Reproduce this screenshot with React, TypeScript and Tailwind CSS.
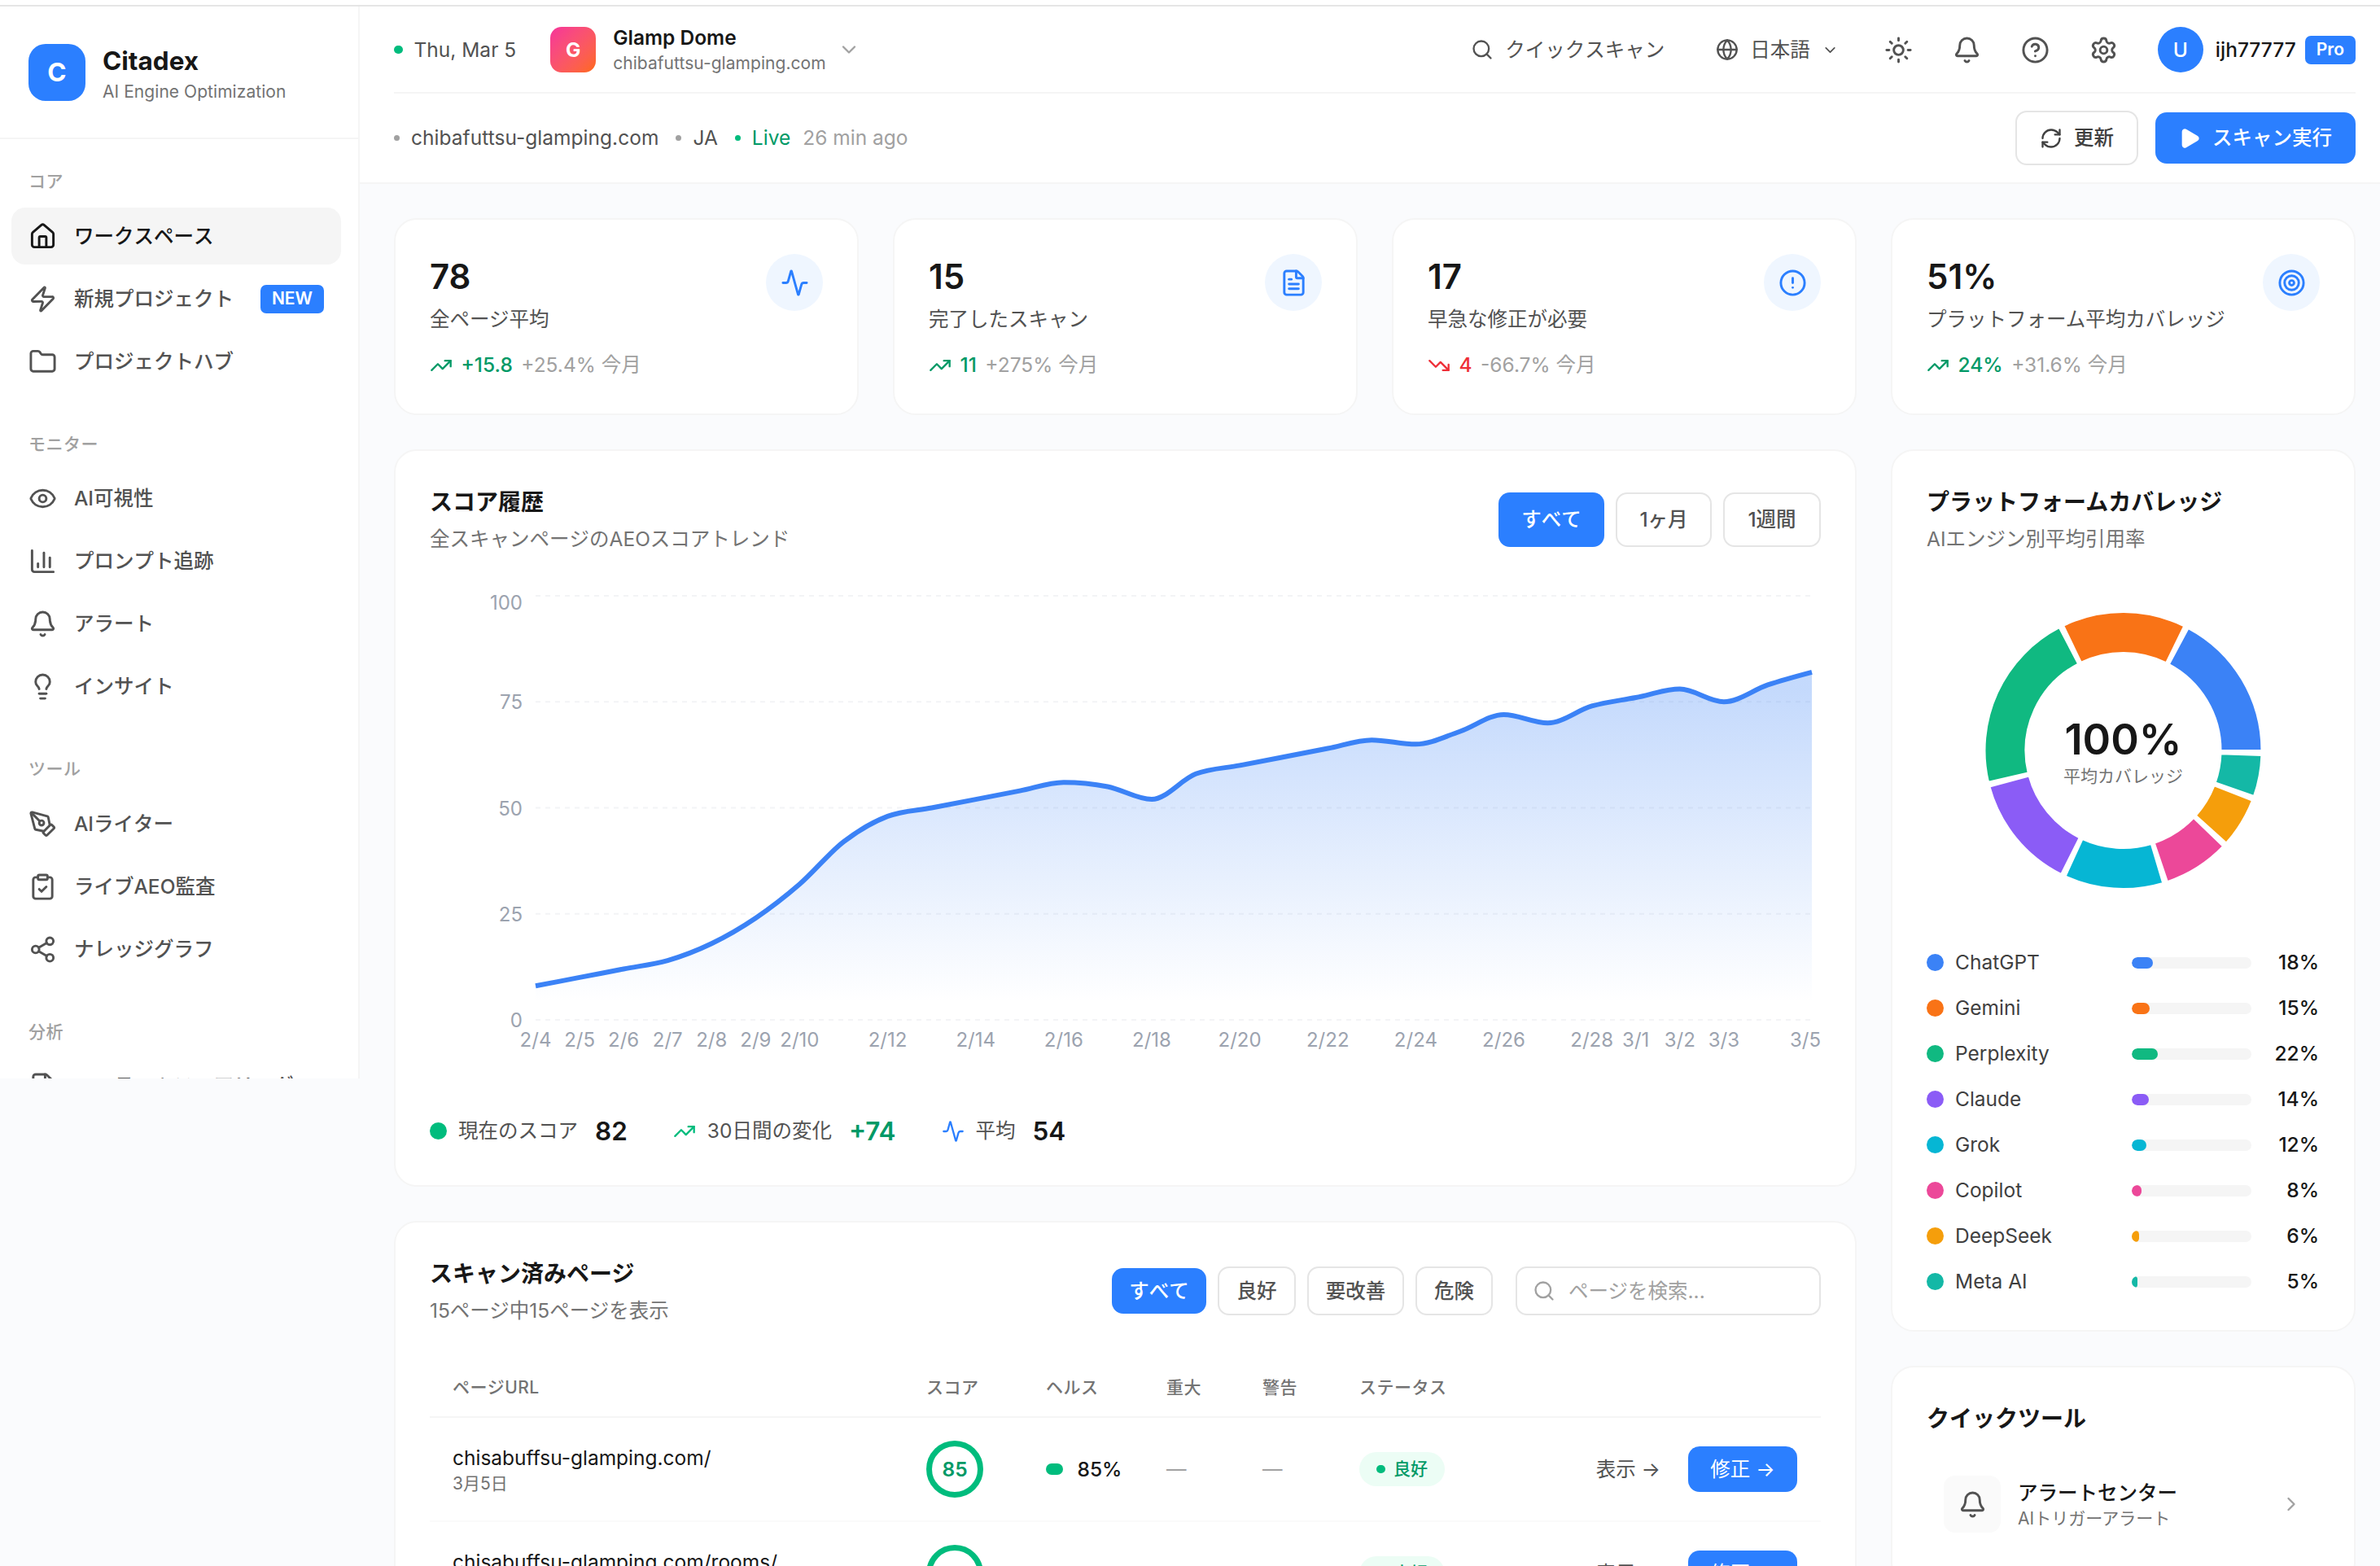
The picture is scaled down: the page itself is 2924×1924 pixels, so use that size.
import React, { useState } from 'react';
import {
  Activity,
  Bell,
  ChartColumn,
  ChevronDown,
  ChevronRight,
  CircleAlert,
  CircleQuestionMark,
  ClipboardCheck,
  Eye,
  FileText,
  Folder,
  Globe,
  House,
  Lightbulb,
  PenTool,
  Play,
  RefreshCw,
  Search,
  Settings,
  Share2,
  Sun,
  Target,
  TrendingDown,
  TrendingUp,
  Zap,
} from 'lucide-react';

const navSections = [
  {
    label: 'コア',
    items: [
      { name: 'ワークスペース', icon: House, active: true },
      { name: '新規プロジェクト', icon: Zap, badge: 'NEW' },
      { name: 'プロジェクトハブ', icon: Folder },
    ],
  },
  {
    label: 'モニター',
    items: [
      { name: 'AI可視性', icon: Eye },
      { name: 'プロンプト追跡', icon: ChartColumn },
      { name: 'アラート', icon: Bell },
      { name: 'インサイト', icon: Lightbulb },
    ],
  },
  {
    label: 'ツール',
    items: [
      { name: 'AIライター', icon: PenTool },
      { name: 'ライブAEO監査', icon: ClipboardCheck },
      { name: 'ナレッジグラフ', icon: Share2 },
    ],
  },
  {
    label: '分析',
    items: [{ name: 'コンテンツスコアリング', icon: FileText }],
  },
];

const stats = [
  { value: '78', label: '全ページ平均', change: '+15.8', percent: '+25.4% 今月', up: true, icon: Activity },
  { value: '15', label: '完了したスキャン', change: '11', percent: '+275% 今月', up: true, icon: FileText },
  { value: '17', label: '早急な修正が必要', change: '4', percent: '-66.7% 今月', up: false, icon: CircleAlert },
  { value: '51%', label: 'プラットフォーム平均カバレッジ', change: '24%', percent: '+31.6% 今月', up: true, icon: Target },
];

const ranges = [
  { label: 'すべて', width: 'w-[130px]' },
  { label: '1ヶ月', width: 'w-[118px]' },
  { label: '1週間', width: 'w-[120px]' },
];

const filters = [
  { label: 'すべて', width: 'w-[116px]' },
  { label: '良好', width: 'w-[96px]' },
  { label: '要改善', width: 'w-[119px]' },
  { label: '危険', width: 'w-[95px]' },
];

const platforms = [
  { name: 'ChatGPT', value: 18, color: '#3b82f6' },
  { name: 'Gemini', value: 15, color: '#f97316' },
  { name: 'Perplexity', value: 22, color: '#10b981' },
  { name: 'Claude', value: 14, color: '#8b5cf6' },
  { name: 'Grok', value: 12, color: '#06b6d4' },
  { name: 'Copilot', value: 8, color: '#ec4899' },
  { name: 'DeepSeek', value: 6, color: '#f59e0b' },
  { name: 'Meta AI', value: 5, color: '#14b8a6' },
];

const pages = [
  { url: 'chisabuffsu-glamping.com/', date: '3月5日', score: 85 },
  { url: 'chisabuffsu-glamping.com/rooms/', date: '3月5日', score: 82 },
];

const scores = [
  8, 10, 12, 14, 18, 24, 32, 42, 48, 50, 52, 54, 56, 55, 52, 58, 60, 62, 64, 66, 65, 68, 72, 70, 74, 76, 78, 75, 79, 82,
];

const xTicks: [number, string][] = [
  [0, '2/4'], [1, '2/5'], [2, '2/6'], [3, '2/7'], [4, '2/8'], [5, '2/9'], [6, '2/10'], [8, '2/12'],
  [10, '2/14'], [12, '2/16'], [14, '2/18'], [16, '2/20'], [18, '2/22'], [20, '2/24'], [22, '2/26'],
  [24, '2/28'], [25, '3/1'], [26, '3/2'], [27, '3/3'],
];

// plot area inside the score chart
const LEFT = 130;
const RIGHT = 1698;
const TOP = 10;
const BOTTOM = 531;

const px = (i: number) => LEFT + (i * (RIGHT - LEFT)) / (scores.length - 1);
const py = (v: number) => BOTTOM - (v * (BOTTOM - TOP)) / 100;

// monotone cubic curve through the points
const monotonePath = (pts: [number, number][]) => {
  const n = pts.length;
  const slope = (i: number) => (pts[i + 1][1] - pts[i][1]) / (pts[i + 1][0] - pts[i][0]);
  const tangents = pts.map((_, i) => {
    if (i === 0 || i === n - 1) return 0;
    const a = slope(i - 1);
    const b = slope(i);
    return (Math.sign(a) + Math.sign(b)) * Math.min(Math.abs(a), Math.abs(b), 0.5 * Math.abs((a + b) / 2)) || 0;
  });
  tangents[0] = (3 * slope(0) - tangents[1]) / 2;
  tangents[n - 1] = (3 * slope(n - 2) - tangents[n - 2]) / 2;
  let d = `M${pts[0][0]},${pts[0][1]}`;
  for (let i = 0; i < n - 1; i++) {
    const dx = (pts[i + 1][0] - pts[i][0]) / 3;
    d += `C${pts[i][0] + dx},${pts[i][1] + dx * tangents[i]},${pts[i + 1][0] - dx},${pts[i + 1][1] - dx * tangents[i + 1]},${pts[i + 1][0]},${pts[i + 1][1]}`;
  }
  return d;
};

const ScoreChart = () => {
  const line = monotonePath(scores.map((v, i) => [px(i), py(v)]));
  return (
    <svg viewBox="0 0 1709 601" className="mt-6 block h-[601px] w-full overflow-visible">
      <defs>
        <linearGradient id="scoreFill" x1="0" y1="0" x2="0" y2="1">
          <stop offset="5%" stopColor="#3b82f6" stopOpacity="0.3" />
          <stop offset="95%" stopColor="#3b82f6" stopOpacity="0" />
        </linearGradient>
      </defs>
      {[0, 25, 50, 75, 100].map((v) => (
        <g key={v}>
          <line x1={LEFT} x2={RIGHT} y1={py(v)} y2={py(v)} stroke="#f3f4f6" strokeWidth="2" strokeDasharray="6 6" />
          <text x="114" y={v === 100 ? 27 : py(v) + 9} textAnchor="end" fontSize="24" fill="#9ca3af">
            {v}
          </text>
        </g>
      ))}
      <path d={`${line}L${RIGHT},${BOTTOM}L${LEFT},${BOTTOM}Z`} fill="url(#scoreFill)" />
      <path d={line} fill="none" stroke="#3b82f6" strokeWidth="6" />
      {xTicks.map(([i, label]) => (
        <text key={label} x={px(i)} y="564" textAnchor="middle" fontSize="24" fill="#9ca3af">
          {label}
        </text>
      ))}
      <text x="1709" y="564" textAnchor="end" fontSize="24" fill="#9ca3af">3/5</text>
    </svg>
  );
};

const CoverageDonut = () => {
  const cx = 285;
  const cy = 200;
  const pad = 2;
  const total = 360 - platforms.length * pad;
  const point = (r: number, deg: number) => {
    const a = (deg * Math.PI) / 180;
    return `${cx + r * Math.cos(a)},${cy - r * Math.sin(a)}`;
  };
  let angle = 0;
  return (
    <div className="relative mt-6 mb-[43px] h-[400px]">
      <svg viewBox="0 0 570 400" className="-mx-[44px] block h-full w-[calc(100%+88px)]">
        {platforms.map((p) => {
          const start = angle;
          const end = start + (p.value / 100) * total;
          angle = end + pad;
          return (
            <path
              key={p.name}
              d={`M${point(170, start)}A170,170,0,0,0,${point(170, end)}L${point(120, end)}A120,120,0,0,1,${point(120, start)}Z`}
              fill={p.color}
              stroke="#fff"
              strokeWidth="2"
            />
          );
        })}
      </svg>
      <div className="absolute inset-0 flex flex-col items-center justify-center">
        <span className="text-3xl font-semibold text-neutral-900">100%</span>
        <span className="text-xs text-neutral-500">平均カバレッジ</span>
      </div>
    </div>
  );
};

const Sidebar = () => (
  <aside className="h-[1317px] w-[442px] shrink-0 overflow-hidden border-r-2 border-neutral-100 bg-white">
    <div className="flex items-center gap-3 border-b-2 border-neutral-100 px-5 py-6">
      <div className="flex h-10 w-10 items-center justify-center rounded-xl bg-blue-500 text-lg font-bold text-white">C</div>
      <div>
        <h1 className="text-lg font-bold text-neutral-900">Citadex</h1>
        <p className="text-xs tracking-[0.05px] text-neutral-500">AI Engine Optimization</p>
      </div>
    </div>
    <nav className="pt-[38px] pr-[21px] pl-2 [font-kerning:none]">
      {navSections.map((section) => (
        <div key={section.label} className="mb-[52.5px]">
          <p className="mb-[18px] pl-3 text-xs font-medium tracking-wide text-neutral-400">{section.label}</p>
          <div className="flex flex-col gap-1">
            {section.items.map((item) => (
              <a
                key={item.name}
                className={`flex h-10 items-center gap-3 rounded-[17px] px-3 text-sm font-medium whitespace-nowrap ${
                  item.active ? 'bg-neutral-100 text-neutral-900' : 'text-neutral-600'
                }`}
              >
                <item.icon className="h-5 w-5 shrink-0" />
                {item.name}
                {item.badge && (
                  <span className="ml-auto rounded-[7px] bg-blue-500 px-2 py-0.5 text-xs font-semibold text-white">
                    {item.badge}
                  </span>
                )}
              </a>
            ))}
          </div>
        </div>
      ))}
    </nav>
  </aside>
);

const Header = () => (
  <header className="border-b-2 border-neutral-100 bg-white pr-[30px] pl-6">
    <div className="flex h-[107px] items-center border-b-2 border-neutral-100 pt-px text-sm text-neutral-600">
      <span className="h-1.5 w-1.5 rounded-full bg-emerald-500" />
      <span className="ml-2">Thu, Mar 5</span>
      <div className="ml-6 flex items-center">
        <div className="flex h-8 w-8 items-center justify-center rounded-lg bg-linear-to-br from-[#f6339a] to-[#ff6900] text-sm font-bold text-white">
          G
        </div>
        <div className="ml-3 pt-px">
          <p className="leading-[31px] font-semibold text-neutral-900">Glamp Dome</p>
          <p className="text-xs leading-[31px] tracking-[0.05px] text-neutral-500">chibafuttsu-glamping.com</p>
        </div>
        <ChevronDown className="ml-2 h-4 w-4 text-neutral-400" />
      </div>
      <div className="ml-auto flex items-center">
        <Search className="h-4 w-4" />
        <span className="ml-2 [font-kerning:none]">クイックスキャン</span>
        <Globe className="ml-[63px] h-4 w-4" />
        <span className="ml-2">日本語</span>
        <ChevronDown className="ml-[14px] h-3 w-3" />
        <div className="ml-[56px] flex items-center gap-7">
          <Sun className="h-5 w-5" />
          <Bell className="h-5 w-5" />
          <CircleQuestionMark className="h-5 w-5" />
          <Settings className="h-5 w-5" />
        </div>
        <div className="ml-7 flex h-8 w-8 items-center justify-center rounded-full bg-blue-500 font-medium text-white">U</div>
        <span className="ml-[15px] font-medium text-neutral-900">ijh77777</span>
        <span className="ml-[11px] rounded-[7px] bg-blue-500 px-2 py-0.5 text-xs font-semibold text-white">Pro</span>
      </div>
    </div>
    <div className="flex h-[109px] items-center justify-between">
      <div className="flex items-center text-sm text-neutral-600">
        <span className="h-1 w-1 rounded-full bg-neutral-400" />
        <span className="ml-2 tracking-[0.03px]">chibafuttsu-glamping.com</span>
        <span className="ml-3 h-1 w-1 rounded-full bg-neutral-400" />
        <span className="ml-2">JA</span>
        <span className="ml-3 h-1 w-1 rounded-full bg-emerald-500" />
        <span className="ml-2 text-emerald-600">Live</span>
        <span className="ml-[15px] text-neutral-400">26 min ago</span>
      </div>
      <div className="flex items-center gap-3">
        <button className="flex h-[67px] items-center gap-2 rounded-[14px] border-2 border-neutral-200 px-4 text-sm font-medium text-neutral-700">
          <RefreshCw className="h-4 w-4" />
          更新
        </button>
        <button className="flex h-9 items-center gap-2 rounded-[14px] bg-blue-500 pr-[29px] pl-4 text-sm font-medium text-white [font-kerning:none]">
          <Play className="h-4 w-4 fill-white" />
          スキャン実行
        </button>
      </div>
    </div>
  </header>
);

const StatCard = ({ stat }: { stat: (typeof stats)[number] }) => {
  const Trend = stat.up ? TrendingUp : TrendingDown;
  return (
    <div className="flex items-start justify-between rounded-[28px] border-2 border-neutral-100 bg-white p-6">
      <div>
        <p className="text-2xl font-semibold text-neutral-900">{stat.value}</p>
        <p className="mt-1 text-sm whitespace-nowrap text-neutral-600">{stat.label}</p>
        <div className="mt-3 flex items-center gap-1.5 text-sm">
          <Trend className={`h-4 w-4 ${stat.up ? 'text-emerald-600' : 'text-[#ee2f38]'}`} />
          <span className={`font-medium ${stat.up ? 'text-emerald-600' : 'text-[#ee2f38]'}`}>{stat.change}</span>
          <span className="text-neutral-400">{stat.percent}</span>
        </div>
      </div>
      <div className="flex h-10 w-10 shrink-0 items-center justify-center rounded-full bg-blue-50">
        <stat.icon className="h-5 w-5 text-blue-500" />
      </div>
    </div>
  );
};

const ScoreHistory = () => {
  const [range, setRange] = useState('すべて');
  return (
    <section className="rounded-[28px] border-2 border-neutral-100 bg-white p-6">
      <div className="flex items-center justify-between">
        <div>
          <h2 className="text-base font-semibold text-neutral-900">スコア履歴</h2>
          <p className="mt-1 text-sm text-neutral-500 [font-kerning:none]">全スキャンページのAEOスコアトレンド</p>
        </div>
        <div className="flex gap-2">
          {ranges.map(({ label, width }) => (
            <button
              key={label}
              onClick={() => setRange(label)}
              className={`h-[67px] rounded-[14px] text-sm font-medium [font-kerning:none] ${width} ${
                range === label ? 'bg-blue-500 text-white' : 'border-2 border-neutral-200 text-neutral-600'
              }`}
            >
              {label}
            </button>
          ))}
        </div>
      </div>
      <ScoreChart />
      <div className="mt-6 flex items-center gap-8">
        <div className="flex items-center gap-2">
          <span className="h-3 w-3 rounded-full bg-emerald-500" />
          <span className="text-sm text-neutral-600">現在のスコア</span>
          <span className="ml-1 text-lg font-semibold text-neutral-900">82</span>
        </div>
        <div className="flex items-center gap-2">
          <TrendingUp className="h-4 w-4 text-emerald-500" />
          <span className="text-sm text-neutral-600">30日間の変化</span>
          <span className="ml-1 text-lg font-semibold text-emerald-600">+74</span>
        </div>
        <div className="flex items-center gap-2">
          <Activity className="h-4 w-4 text-blue-500" />
          <span className="text-sm text-neutral-600">平均</span>
          <span className="ml-1 text-lg font-semibold text-neutral-900">54</span>
        </div>
      </div>
    </section>
  );
};

const ScannedPages = () => {
  const [filter, setFilter] = useState('すべて');
  return (
    <section className="rounded-[28px] border-2 border-neutral-100 bg-white p-6">
      <div className="flex items-center justify-between">
        <div>
          <h2 className="text-base font-semibold text-neutral-900">スキャン済みページ</h2>
          <p className="mt-1 text-sm text-neutral-500">15ページ中15ページを表示</p>
        </div>
        <div className="flex items-center gap-2">
          {filters.map(({ label, width }) => (
            <button
              key={label}
              onClick={() => setFilter(label)}
              className={`rounded-[14px] text-sm font-medium [font-kerning:none] ${width} ${
                filter === label ? 'h-8 bg-blue-500 text-white' : 'h-[60px] border-2 border-neutral-200 text-neutral-600'
              }`}
            >
              {label}
            </button>
          ))}
          <div className="ml-2 flex h-[60px] w-[375px] items-center gap-[16px] rounded-[14px] border-2 border-neutral-200 pl-[19px] text-sm text-neutral-400">
            <Search className="h-4 w-4" />
            <span>ページを検索...</span>
          </div>
        </div>
      </div>

      <div className="mt-6 grid h-[72px] grid-cols-[582px_147px_148px_118px_119px_1fr] items-center border-b-2 border-neutral-100 px-4 text-xs font-medium tracking-wide text-neutral-500">
        <span>ページURL</span>
        <span>スコア</span>
        <span>ヘルス</span>
        <span>重大</span>
        <span>警告</span>
        <span>ステータス</span>
      </div>
      {pages.map((page) => (
        <div
          key={page.url}
          className="grid h-[128px] grid-cols-[582px_147px_148px_118px_119px_1fr] items-center border-b-2 border-neutral-50 px-4 text-sm"
        >
          <div>
            <p className="text-neutral-900">{page.url}</p>
            <p className="text-xs text-neutral-500">{page.date}</p>
          </div>
          <div className="flex h-10 w-10 items-center justify-center rounded-full border-[7px] border-emerald-500 font-semibold text-emerald-600">
            {page.score}
          </div>
          <div className="flex items-center gap-2.5">
            <span className="h-2 w-3 rounded-full bg-emerald-500" />
            <span className="font-medium text-neutral-900">{page.score}%</span>
          </div>
          <span className="text-neutral-400">—</span>
          <span className="text-neutral-400">—</span>
          <div className="flex items-center justify-between">
            <span className="flex h-[42px] items-center gap-1.5 rounded-full bg-emerald-50 px-3 text-xs font-medium text-emerald-600">
              <span className="h-1.5 w-1.5 rounded-full bg-emerald-500" />
              良好
            </span>
            <div className="flex items-center">
              <button className="mr-[34px] text-neutral-600">表示 →</button>
              <button className="mr-px h-8 w-[134px] rounded-[14px] bg-blue-500 text-white">修正 →</button>
            </div>
          </div>
        </div>
      ))}
    </section>
  );
};

const PlatformCoverage = () => (
  <section className="rounded-[28px] border-2 border-neutral-100 bg-white p-6">
    <h2 className="text-base font-semibold text-neutral-900">プラットフォームカバレッジ</h2>
    <p className="mt-1 text-sm text-neutral-500">AIエンジン別平均引用率</p>
    <CoverageDonut />
    <ul className="flex flex-col gap-3 text-sm">
      {platforms.map((p) => (
        <li key={p.name} className="flex items-center pr-px">
          <span className="mr-2 h-3 w-3 rounded-full" style={{ backgroundColor: p.color }} />
          <span className="text-neutral-700">{p.name}</span>
          <div className="ml-auto h-2 w-[147px] overflow-hidden rounded-full bg-neutral-100">
            <div className="h-full rounded-full" style={{ width: `${p.value}%`, backgroundColor: p.color }} />
          </div>
          <span className="w-[83px] text-right font-medium text-neutral-900">{p.value}%</span>
        </li>
      ))}
    </ul>
  </section>
);

const QuickTools = () => (
  <section className="rounded-[28px] border-2 border-neutral-100 bg-white p-6">
    <h2 className="text-base font-semibold text-neutral-900">クイックツール</h2>
    <div className="mt-4 flex items-center p-3">
      <div className="flex h-10 w-10 items-center justify-center rounded-[14px] bg-neutral-50 text-neutral-600">
        <Bell className="h-5 w-5" />
      </div>
      <div className="ml-3">
        <p className="text-sm font-medium text-neutral-900">アラートセンター</p>
        <p className="text-xs text-neutral-500">AIトリガーアラート</p>
      </div>
      <ChevronRight className="ml-auto h-4 w-4 text-neutral-400" />
    </div>
  </section>
);

export default function App() {
  return (
    <div className="h-[1924px] w-[2924px] overflow-hidden bg-[#fafbfd] font-['Inter','Noto_Sans_CJK_JP',sans-serif] antialiased">
      {/* the whole dashboard is sized in rem */}
      <style>{`html { font-size: 28px; }`}</style>
      <div className="h-[8px] border-b-2 border-neutral-200 bg-white" />
      <div className="flex items-start">
        <Sidebar />
        <div className="min-w-0 flex-1">
          <Header />
          <main className="pt-6 pr-[30px] pl-6">
            <div className="grid grid-cols-4 gap-6">
              {stats.map((stat) => (
                <StatCard key={stat.label} stat={stat} />
              ))}
            </div>
            <div className="mt-6 grid grid-cols-4 items-start gap-6">
              <div className="col-span-3 flex flex-col gap-6">
                <ScoreHistory />
                <ScannedPages />
              </div>
              <div className="flex flex-col gap-6">
                <PlatformCoverage />
                <QuickTools />
              </div>
            </div>
          </main>
        </div>
      </div>
    </div>
  );
}
